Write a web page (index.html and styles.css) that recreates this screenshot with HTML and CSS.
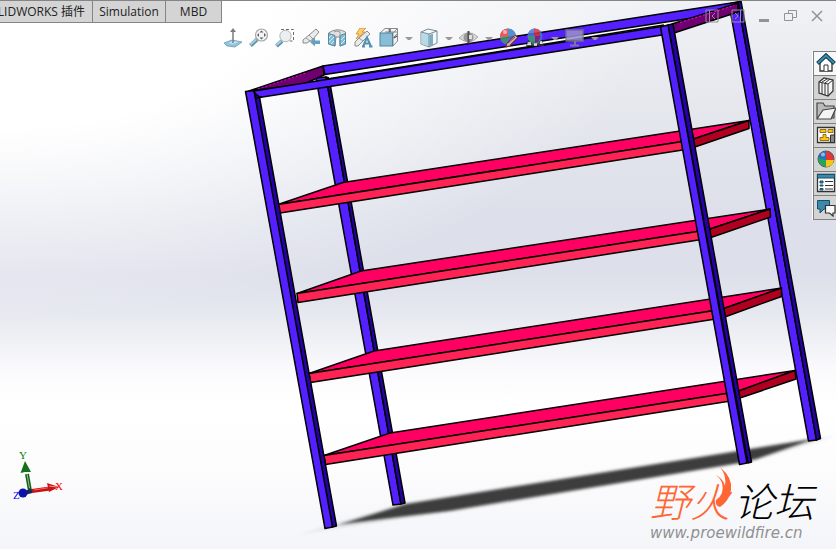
FILE: index.html
```html
<!DOCTYPE html>
<html lang="zh-CN">
<head>
<meta charset="utf-8">
<title>SOLIDWORKS</title>
<link rel="stylesheet" href="styles.css">
</head>
<body>
<main class="viewport">
  <svg class="scene" viewBox="0 0 836 549" preserveAspectRatio="xMaxYMin meet" role="img" aria-label="Shelf model">
    <defs>
      <filter id="soft" x="-10%" y="-20%" width="120%" height="140%"><feGaussianBlur stdDeviation="1.8"/></filter>
    </defs>
    <g filter="url(#soft)">
      <path fill="#c9cacd" d="M300 534 340 522 405 503 738 451 836 436 755 460 500 504z" opacity=".4"/>
      <path fill="#3d3d3d" d="M337 525 405 504 738 451 818 438 757 459 740 463 450 511z"/>
    </g>
    <g stroke="#000" stroke-width="1.5" stroke-linejoin="round">
      <g id="back-legs">
        <path fill="#5420ff" d="M316 78 326 77 401 504 393 505z"/>
        <path fill="#2600a8" d="M326 77 329 78 405 503 401 504z"/>
        <path fill="#5420ff" d="M729 4 738 2 816.5 440 808.5 441z"/>
        <path fill="#2600a8" d="M738 2 741 1 820.5 438.500 816.5 440z"/>
      </g>
      <g id="top-frame">
        <path fill="#fff" stroke="none" d="M329 74 668 21 668 26 329 80z"/>
        <path fill="none" d="M327 79 664 25"/>
        <path fill="#5420ff" d="M323 66 738 2 738 11 325 74.500z"/>
        <path fill="#700070" d="M249 91 323 66 324 75 304 84z"/>
        <path fill="none" stroke="#f0f" stroke-dasharray="1.500 2.500" stroke-width="1" d="M258 89 306 73"/>
        <path fill="#700070" d="M672 24 738 3 738 12 674 33z"/>
        <path fill="none" stroke="#f0f" stroke-dasharray="2 2" stroke-width="1" d="M680 22.500 734 5.500"/>
        <path fill="#5420ff" d="M254 91 662 26.500 662 35 256 98z"/>
      </g>
      <g id="shelves">
        <path fill="#ff0062" d="M278 204.500 343 182.500 749 120.500 689 140.500z"/>
        <path fill="#ff2355" d="M278 204.500 689 140.500 689 149 280 213z"/>
        <path fill="#b00020" d="M689 140.500 749 120.500 749 128.500 689 149z"/>
        <path fill="#ff0062" d="M297 293.500 361 271 770 209 707 230z"/>
        <path fill="#ff2355" d="M297 293.500 707 230 708 238.500 298 302.500z"/>
        <path fill="#b00020" d="M707 230 770 209 770.500 217 708 238.500z"/>
        <path fill="#ff0062" d="M309 373.500 374 351 781.500 288 721 309.500z"/>
        <path fill="#ff2355" d="M309 373.500 721 309.500 722 318 310.500 382.500z"/>
        <path fill="#b00020" d="M721 309.500 781.500 288 781.500 296.500 722 318z"/>
        <path fill="#ff0062" d="M324 455.500 390 433 795 370.500 736 392z"/>
        <path fill="#ff2355" d="M324 455.500 736 392 737 400 325.500 464.500z"/>
        <path fill="#b00020" d="M736 392 795 370.500 796 379 737 399z"/>
      </g>
      <g id="front-legs">
        <path fill="#2600a8" d="M253.500 92 259.500 97 336.500 526 332.500 527z"/>
        <path fill="#5420ff" d="M245.500 91.500 254 90.500 332.500 527 325 528.500z"/>
        <path fill="#2600a8" d="M668 25 673 24 751.500 462 748 463z"/>
        <path fill="#5420ff" d="M660.500 27 668 25 747 463 739.500 464.500z"/>
        <path fill="none" d="M254 91 256 98 262 97"/>
      </g>
    </g>
  </svg>

  <svg class="triad" viewBox="0 0 56 56" role="img" aria-label="X Y Z">
    <path stroke="#17601c" stroke-width="4" d="M20 41 17 24"/>
    <path stroke="#8cc18e" d="M19.500 38 17 24"/>
    <path fill="#14701a" d="M15 11 10.500 23 15 22 21 22z"/>
    <path stroke="#c41010" stroke-width="4" d="M22 41 40 38.500"/>
    <path stroke="#ff6060" d="M24 40 40 37.500"/>
    <path fill="#c41414" d="M37 33 49 37 39 42z"/><path stroke="#f88" d="M39 36 47 37"/>
    <path stroke="#20205a" stroke-width="4" d="M14 43 22 41"/>
    <circle cx="13" cy="43" r="4.500" fill="#1010a8"/>
    <text x="9" y="9" fill="#008000">Y</text>
    <text x="45" y="40" fill="#f00">X</text>
    <text x="3" y="49" fill="#00f">Z</text>
  </svg>

  <nav class="tabs" aria-label="CommandManager">
    <button class="tab tab-first">SOLIDWORKS 插件</button>
    <button class="tab tab-mid">Simulation</button>
    <button class="tab tab-last">MBD</button>
  </nav>

  <div class="toolbar" role="toolbar" aria-label="View">
    <button aria-label="Normal to"><svg viewBox="0 0 20 20"><path fill="#7fbbd6" stroke="#3f7d98" stroke-width=".7" d="M1 15 9 12 19 14 12 19 4 18z"/><path fill="#b9dfed" d="M5 15 10 13 16 14 10 16z"/><path stroke="#666" stroke-width="1.500" d="M10 15V3"/><path fill="#666" d="M10 0 13 4H7z"/></svg></button>
    <button aria-label="Zoom to fit"><svg viewBox="0 0 20 20"><path stroke="#477f9a" stroke-width="4" d="M1.500 17.500 8 11.500"/><path stroke="#94c8dd" stroke-width="2" d="M1.500 16.500 7 11.500"/><circle cx="12.500" cy="7" r="6" fill="#f1f3f4" stroke="#999" stroke-width="1.200"/><path fill="#444" d="M12.500 2.500 14.500 4.500h-4zM12.500 11.500 10.500 9.500h4zM8 7 10 5v4zM17 7 15 5v4z"/></svg></button>
    <button aria-label="Zoom to area"><svg viewBox="0 0 20 20"><path fill="none" stroke="#555" stroke-dasharray="3 2" d="M6 1.500H18.500V13H14"/><path stroke="#477f9a" stroke-width="4" d="M1.500 18 7 13"/><path stroke="#94c8dd" stroke-width="2" d="M1.500 17 6 13"/><circle cx="10.500" cy="8" r="5.700" fill="#e8edef" stroke="#aaa"/></svg></button>
    <button aria-label="Previous view"><svg viewBox="0 0 20 20"><path fill="#e8e8e8" stroke="#777" d="M15 1 18 4 12 11 6 15 2 15 2 12 8 7z"/><path fill="none" stroke="#888" d="M8 7 12 11M5 10 9 13"/><path fill="#4c93b5" d="M9 14 14 9.500V12.500H19V16H14V18.500z"/></svg></button>
    <button aria-label="Section view"><svg viewBox="0 0 20 20"><path fill="#ddd" stroke="#777" d="M1.500 5Q10-1 18.500 4V16L13 18V9H9L8 18 1.500 16z"/><path fill="#6eb2d0" stroke="#38758f" d="M1.500 5.500 8 7.500V18L1.500 16zM13 7.500 18.500 5.500V16L13 18z"/><path stroke="#d3edf7" d="M2 10 5 7M2 14 7 9M4 16 7 13M14 12 18 8M14 16 18 12"/><path fill="none" stroke="#888" d="M7 4Q10 2 13 4V8"/></svg></button>
    <button aria-label="Dynamic annotation views"><svg viewBox="0 0 20 20"><path fill="#e8e8e8" stroke="#777" d="M14 3 17 6 11 12 5 18 2 18 2 14 7 9z"/><path stroke="#888" d="M6 10 10 13"/><path fill="#ffc549" stroke="#c77a16" stroke-width=".8" d="M7 0h6L9 4h3L3 11 6 6H3z"/><path fill="none" stroke="#347fa5" stroke-width="2" d="M10 18.500 14 9.500 18 18.500M11.500 15.500H17M9 18.500h3M16 18.500h3.500"/></svg></button>
    <button aria-label="View orientation"><svg viewBox="0 0 20 20"><path fill="#f4f4f4" stroke="#777" d="M1 5 6 .500H18.500V13L14 18z"/><path stroke="#777" d="M6 4H18M14 17V5L18 1M14 10 18 6M10 1V5"/><rect x="1" y="5" width="12.500" height="13" fill="#75b3d1" stroke="#35718d"/><path stroke="#444" stroke-width="1.500" d="M11 1 11 4M18 8 15 10"/></svg></button>
    <span class="caret"></span>
    <button aria-label="Display style"><svg viewBox="0 0 20 20"><path fill="#f3fafd" stroke="#657780" d="M2 4 9 1 18 3V15L10 19 2 16z"/><path fill="#aad7e8" d="M2.500 4.500 10 6V18.500L2.500 16z"/><path fill="#679fb7" d="M10.500 7 14 5.500V17L10.500 18.500z"/><path fill="none" stroke="#657780" d="M2 4 10 6 18 3M10 6V19"/></svg></button>
    <span class="caret"></span>
    <button aria-label="Hide or show items"><svg viewBox="0 0 20 20"><path fill="#d8d8d8" stroke="#999" d="M0 10Q9 0 19 9 11 18 0 10z"/><circle cx="9.500" cy="9.500" r="5" fill="#888"/><path stroke="#333" stroke-width="2" d="M9.500 3V16"/><path fill="#ddd" d="M10 7h3v4h-3z"/></svg></button>
    <span class="caret"></span>
    <button aria-label="Edit appearance"><svg viewBox="0 0 20 20"><circle cx="9" cy="8.500" r="8" fill="#5b78bd"/><path fill="#e43f3e" d="M9 .500A8 8 0 0 0 1 9H9z"/><path fill="#397ec8" d="M9 .500A8 8 0 0 1 17 9H9z"/><path fill="#35a265" d="M1 9H9V16.500A8 8 0 0 1 1 9z"/><circle cx="6" cy="4" r="2" fill="#fff" opacity=".55"/><path fill="#efc1a5" stroke="#733" d="M16 7 19 10 11 18 7 19 8 15z"/><path stroke="#644" d="M9 15 16 9M11 17 18 10"/></svg></button>
    <button aria-label="Apply scene"><svg viewBox="0 0 20 20"><path fill="#333" d="M3 12H17L19 18H1z"/><path fill="#ddd" d="M3 14h3v3H2zM9 15h3v3H9zM15 13h2l1 3h-3z"/><circle cx="10" cy="8" r="7.500" fill="#397ec8"/><path fill="#3d9f68" d="M2.500 8H10V15.500A7.500 7.500 0 0 1 2.500 8z"/><path fill="#4d78d2" d="M10 .500A7.500 7.500 0 0 0 2.500 8H10z"/><path fill="#d63345" d="M9 .500A7.500 7.500 0 0 1 15 3V8H9z"/><path fill="#822873" d="M10 8h6l-3 6-3 1z"/></svg></button>
    <span class="caret"></span>
    <button aria-label="View settings"><svg viewBox="0 0 20 20"><path fill="#9c92cd" stroke="#777985" stroke-width="1.500" d="M1 2H18V13H1z"/><path stroke="#83858e" stroke-width="2" d="M10 13V17M5 17.500H14"/></svg></button>
    <span class="caret"></span>
  </div>

  <div class="window-controls">
    <button aria-label="Left pane"><svg viewBox="0 0 16 16"><path d="M2 2H14V14H2zM5.500 2V14M11 5 8 8 11 11"/></svg></button>
    <button aria-label="Right pane"><svg viewBox="0 0 16 16"><path d="M2 2H14V14H2zM10.500 2V14M5 5 8 8 5 11"/></svg></button>
    <button aria-label="Minimize"><svg viewBox="0 0 16 16"><path stroke-width="3" d="M3 12.500H13"/></svg></button>
    <button aria-label="Restore"><svg viewBox="0 0 16 16"><path d="M2.500 5.500H10.500V12.500H2.500zM6.500 5V2.500H14.500V9.500H11"/></svg></button>
    <button aria-label="Close"><svg viewBox="0 0 16 16"><path stroke-width="1.500" d="M4 3 14 13M14 3 4 13"/></svg></button>
  </div>

  <aside class="task-pane">
    <button class="active" aria-label="Resources"><svg viewBox="0 0 20 20"><path fill="#fff" stroke="#333" stroke-width="1.300" d="M4 9 10 4 16 9V18H4z"/><path fill="#fff" stroke="#333" d="M8 18V12H12V18"/><path fill="none" stroke="#123d52" stroke-width="4" d="M1.500 10.500 10 2.500 18.500 10.500"/><path fill="none" stroke="#3d8bae" stroke-width="2" d="M2 10 10 2.500 18 10"/></svg></button>
    <button aria-label="Design library"><svg viewBox="0 0 20 20"><path fill="#f5f5f5" stroke="#333" stroke-width="1.200" d="M3 5 8 1 17 3V14L12 19 3 16z"/><path stroke="#333" d="M3 5 12 7V19M12 7 17 3M6 6V17M9 6V18M6 5 11 2M9 6 14 2"/></svg></button>
    <button aria-label="File explorer"><svg viewBox="0 0 20 20"><path fill="#bbb" stroke="#444" stroke-width="1.200" d="M1 17V2H7L9 5H18V17z"/><path fill="#f4f4f4" stroke="#444" stroke-width="1.200" d="M1 18 7 9 20 7 15 18z"/></svg></button>
    <button aria-label="View palette"><svg viewBox="0 0 20 20"><path fill="#fff" stroke="#333" stroke-width="1.300" d="M1.500 2.500H18.500V17.500H1.500z"/><path fill="#ffc515" stroke="#795500" stroke-width=".8" d="M4 4.500H10V7.500H4zM12 4.500H17V7.500H12zM7 9.500H10V12.500H13V15.500H4V12.500H7z"/><path fill="#888" stroke="#333" d="M14.500 10H18.500V17.500H14.500z"/></svg></button>
    <button aria-label="Appearances"><svg viewBox="0 0 20 20"><circle cx="10" cy="10" r="8" fill="#1d70bd" stroke="#555"/><path fill="#27a455" d="M2 9 10 11V18Q2 17 2 9z"/><path fill="#f3c719" d="M10 11 18 11Q17 18 10 18z"/><path fill="#e23835" d="M10 2Q17 3 18 11L10 11z"/><path fill="#2873bd" d="M10 2 10 11 2 9Q3 3 10 2z"/><circle cx="7" cy="5.500" r="2" fill="#fff" opacity=".5"/></svg></button>
    <button aria-label="Custom properties"><svg viewBox="0 0 20 20"><path fill="#fff" stroke="#333" stroke-width="1.300" d="M1.500 1.500H18.500V18.500H1.500z"/><path fill="#3b89ad" stroke="#174f6c" d="M1.500 1.500H18.500V5H1.500zM4 8H7V10H4zM4 12H7V13H4zM4 15.500H7V17H4z"/><path stroke="#333" d="M9 8.500H17M9 12.500H17M9 16H17"/></svg></button>
    <button aria-label="Forum"><svg viewBox="0 0 20 20"><path fill="#3b89ad" stroke="#174f6c" d="M1.500 3.500H13.500V12H8L4 16V12H1.500z"/><path fill="#f7f7f7" stroke="#333" stroke-width="1.200" d="M9.500 8.500H19V16H17V19L13.500 16H9.500z"/></svg></button>
  </aside>

  <div class="watermark">
    <div class="brand"><span class="fire">野火</span><span>论坛</span></div>
    <svg class="flame" viewBox="0 0 20 44" aria-hidden="true"><path fill="#ff6633" d="M5 1Q18 12 16 24 14 35 5 41 0 40 1 34 10 28 7 17 5 12 1 9 9 14 10 20 12 10 5 1z"/></svg>
    <a class="site" href="#">www.proewildfire.cn</a>
  </div>
</main>
</body>
</html>
```
FILE: styles.css
```css
* {
  box-sizing: border-box;
}

body {
  margin: 0;
  font: 12px/18px "Open Sans", "Noto Sans CJK SC", sans-serif;
  color: #222;
}

button {
  margin: 0;
  padding: 0;
  border: 0;
  background: none;
  color: inherit;
  font: inherit;
}

button svg {
  display: block;
  width: 20px;
  height: 20px;
  fill: none;
}

.viewport {
  position: relative;
  height: 100vh;
  overflow: hidden;
  border-top: 1px solid #858585;
  background:
    radial-gradient(ellipse 78% 58% at 0 0, #fff 40%, transparent 100%),
    linear-gradient(#f1f2f5 0, #e6e8ee 18%, #dde0ea 38%, #dddfea 50%, #e8eaf1 58%, #fafafc 67%, #fff 74%, #fcfcfd 86%, #f4f5f9 100%);
}

.scene {
  display: block;
  width: 100%;
  margin-top: -1px;
}

.triad {
  position: absolute;
  left: 10px;
  bottom: 43px;
  width: 56px;
  height: 56px;
  fill: none;
  font: 11px "Liberation Serif", serif;
}

.tabs {
  position: absolute;
  top: 0;
  left: 0;
  display: flex;
  height: 22px;
  border-bottom: 1px solid #858585;
  background: #d4d4d4;
}

.tab {
  display: flex;
  align-items: center;
  justify-content: center;
  overflow: hidden;
  border-right: 1px solid #858585;
  white-space: nowrap;
}

.tab-first {
  width: 93px;
  padding-right: 7px;
  justify-content: flex-end;
}

.tab-mid {
  width: 73px;
}

.tab-last {
  width: 56px;
}

.toolbar {
  position: absolute;
  top: 27px;
  left: 223px;
  display: flex;
  align-items: center;
  gap: 6px;
}

.toolbar button {
  opacity: 0.85;
}

.caret {
  width: 8px;
  border: solid transparent;
  border-width: 3px 4px 0 1px;
  border-width: 3px 3px 0;
  border-top-color: #999;
}

.window-controls {
  position: absolute;
  top: 7px;
  right: 7px;
  display: flex;
}

.window-controls button {
  display: grid;
  place-items: center;
  width: 26px;
}

.window-controls svg {
  width: 16px;
  height: 16px;
  stroke: #929298;
}

.task-pane {
  position: absolute;
  top: 50px;
  right: 0;
  width: 23px;
  border: 1px solid #808080;
  border-width: 1px 0 0 1px;
  background: #d4d4d4;
  box-shadow: -1px 0 #fff;
}

.task-pane button {
  display: block;
  width: 100%;
  height: 24px;
  padding: 0 0 2px 2px;
  overflow: hidden;
  border-bottom: 1px solid #808080;
}

.task-pane .active {
  background: #f8f8f8;
}

.watermark {
  position: absolute;
  right: 22px;
  bottom: 7px;
}

.brand {
  display: flex;
  gap: 4px;
  color: #000;
  font: italic 300 40px/48px "Noto Sans CJK SC", sans-serif;
}

.fire {
  color: #ff6633;
}

.flame {
  position: absolute;
  top: -10px;
  left: 65px;
  width: 20px;
  height: 44px;
}

.site {
  display: block;
  color: #909090;
  font: italic 15px/18px "DejaVu Sans", sans-serif;
  text-decoration: none;
}
```
